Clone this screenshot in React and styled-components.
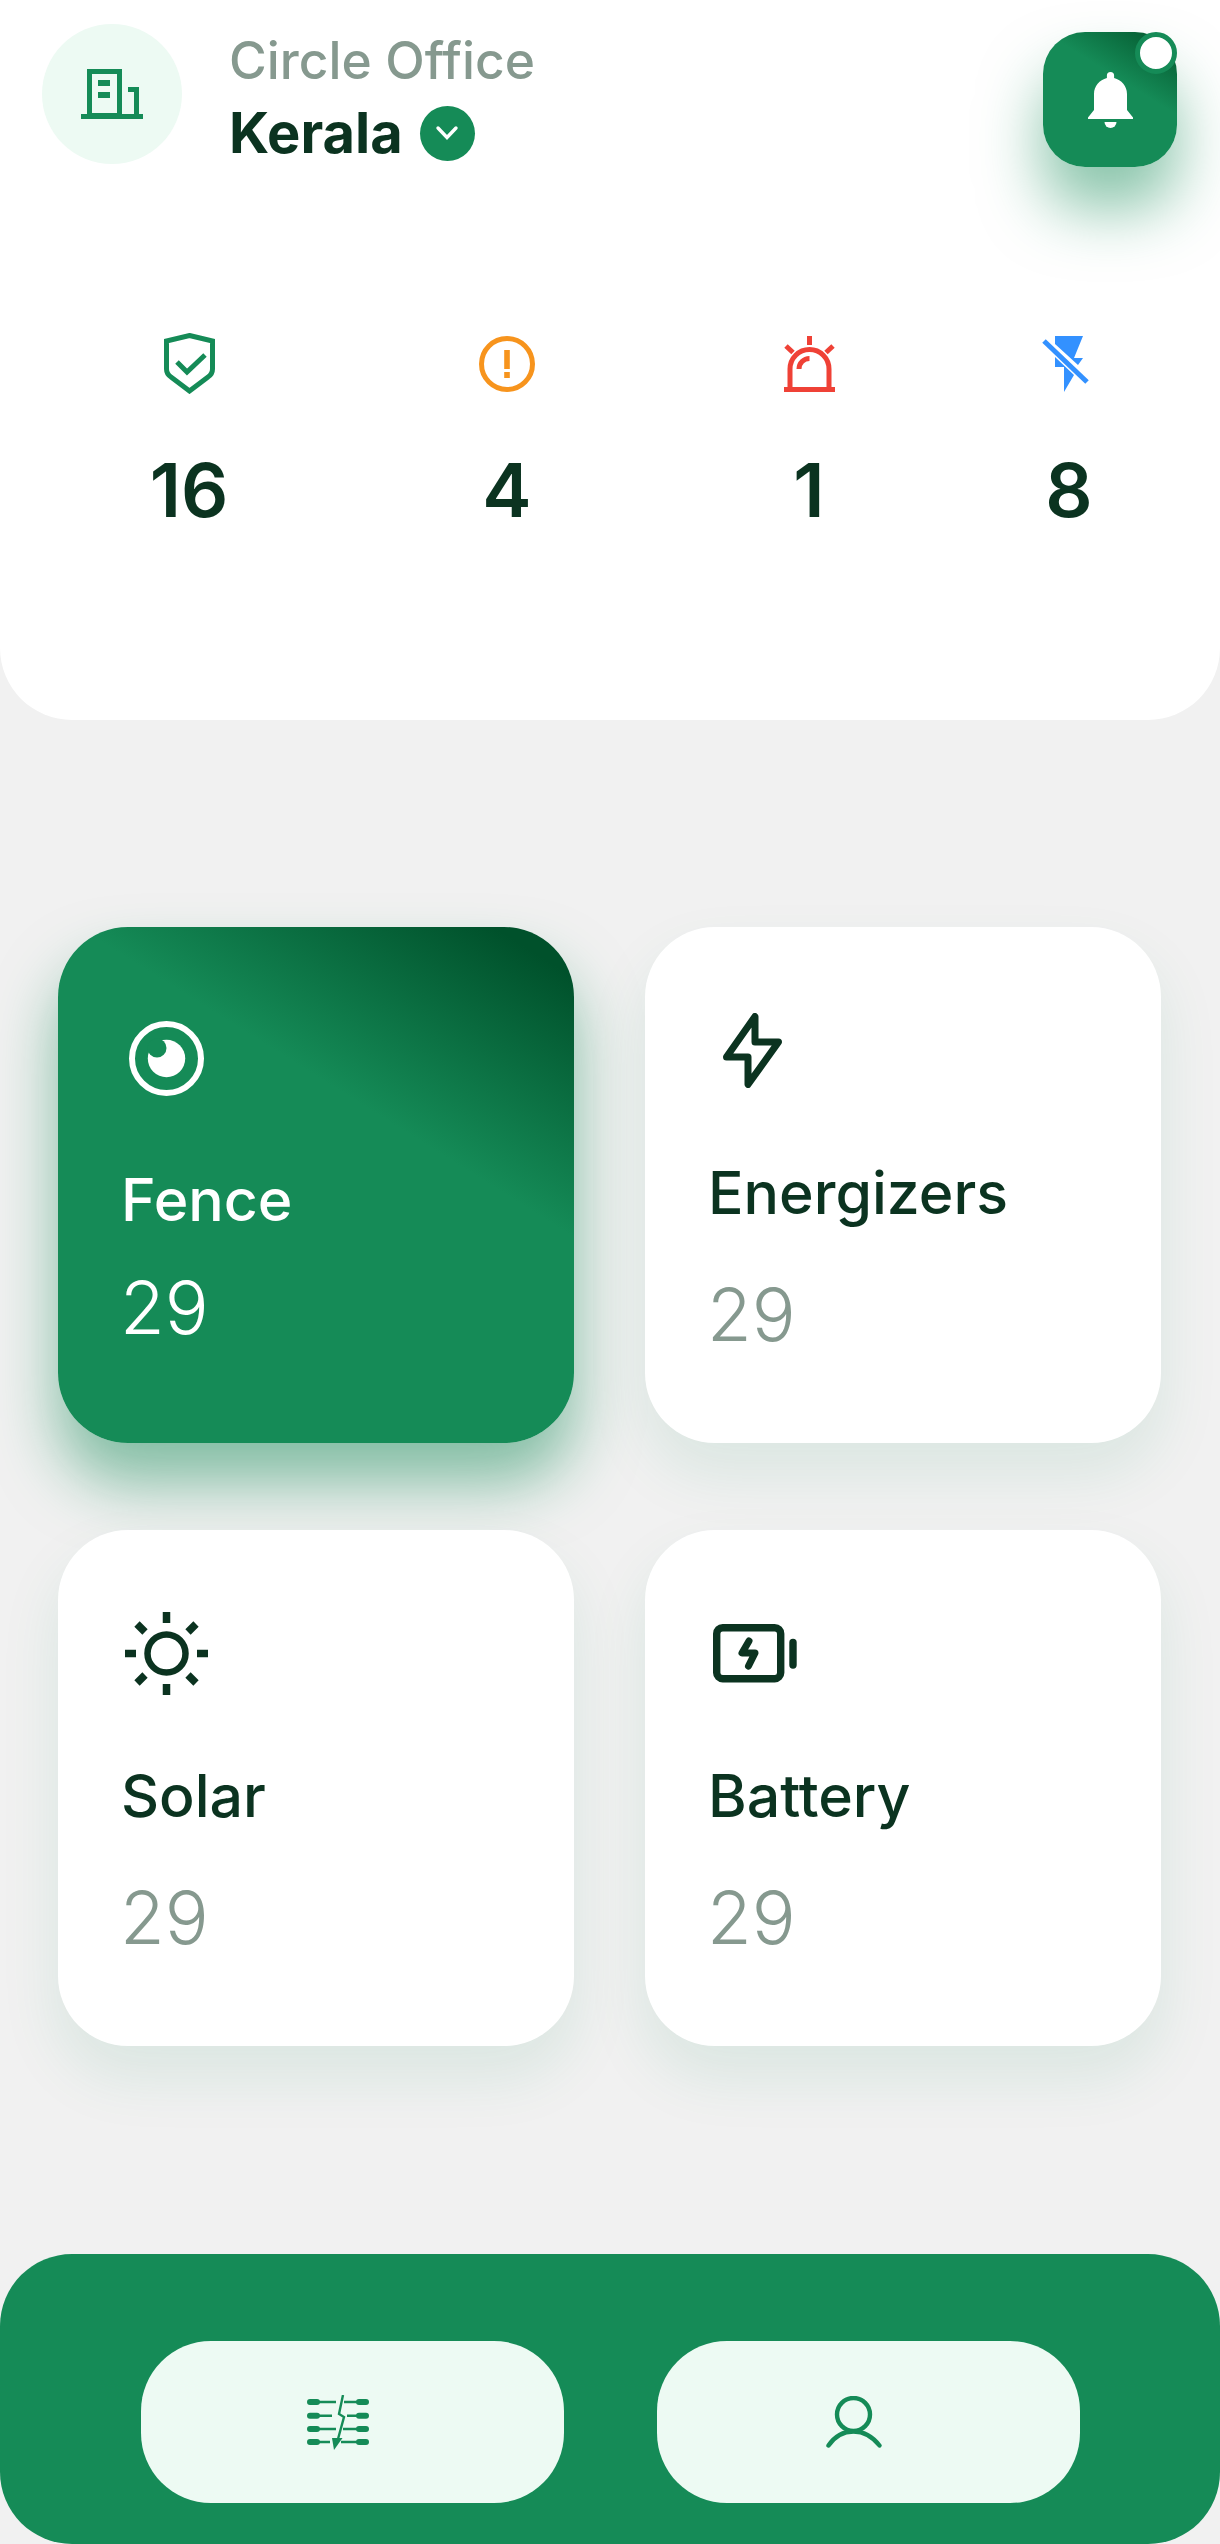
import styled, { createGlobalStyle } from "styled-components";

const GREEN = "#158b57";
const DARK = "#0b3320";
const GREY = "#86998f";
const MINT = "#edfaf3";

const GlobalStyle = createGlobalStyle`
  html, body {
    margin: 0;
    padding: 0;
    background: #f1f1f1;
  }
  * {
    box-sizing: border-box;
  }
`;

const Page = styled.div`
  width: 1220px;
  height: 2544px;
  display: flex;
  flex-direction: column;
  background: #f1f1f1;
  font-family: Inter, "Liberation Sans", sans-serif;
  overflow: hidden;
`;

const Header = styled.header`
  height: 720px;
  padding: 24px 43px 0 42px;
  background: #fff;
  border-radius: 0 0 72px 72px;
`;

const TopRow = styled.div`
  display: flex;
  align-items: flex-start;
`;

const Avatar = styled.div`
  width: 140px;
  height: 140px;
  flex-shrink: 0;
  display: flex;
  align-items: center;
  justify-content: center;
  border-radius: 50%;
  background: ${MINT};
`;

const TitleBlock = styled.div`
  margin-left: 47px;
  padding-top: 6px;
`;

const Subtitle = styled.div`
  font-size: 51.5px;
  line-height: 60px;
  font-weight: 500;
  color: ${GREY};
  white-space: nowrap;
`;

const PlaceRow = styled.div`
  display: flex;
  align-items: center;
  gap: 17px;
  margin-top: 13px;
`;

const Place = styled.div`
  font-size: 56px;
  line-height: 60px;
  font-weight: 700;
  color: ${DARK};
`;

const Chevron = styled.span`
  width: 55px;
  height: 55px;
  display: flex;
  align-items: center;
  justify-content: center;
  border-radius: 50%;
  background: ${GREEN};
`;

const BellButton = styled.button`
  position: relative;
  width: 134px;
  height: 135px;
  margin: 8px 0 0 auto;
  padding: 0;
  display: flex;
  align-items: center;
  justify-content: center;
  border: 0;
  border-radius: 42px;
  background: linear-gradient(212deg, #04592f 4%, ${GREEN} 38%);
  box-shadow: 0 42px 62px rgba(21, 139, 87, 0.5);
`;

const BellDot = styled.span`
  position: absolute;
  top: 0;
  right: 0;
  width: 42px;
  height: 42px;
  border: 5px solid ${GREEN};
  border-radius: 50%;
  background: #fff;
`;

const Stats = styled.div`
  display: grid;
  grid-template-columns: 294px 342px 262px 258px;
  margin: 166px -21px 0 0;
`;

const Stat = styled.div`
  display: flex;
  flex-direction: column;
  align-items: center;
`;

const StatIcon = styled.div`
  height: 61px;
  display: flex;
  align-items: center;
  justify-content: center;
  padding-right: ${({ $shift }) => $shift || 0}px;
`;

const StatValue = styled.div`
  margin-top: 51px;
  font-size: 74px;
  line-height: 90px;
  font-weight: 600;
  color: ${DARK};
`;

const Cards = styled.section`
  display: grid;
  grid-template-columns: 516px 516px;
  grid-auto-rows: 516px;
  column-gap: 71px;
  row-gap: 87px;
  margin-top: 207px;
  padding-left: 58px;
`;

const Card = styled.article`
  padding: ${({ $active }) => ($active ? "81px" : "73px")} 0 0 63px;
  border-radius: 70px;
  background: ${({ $active }) =>
    $active ? `linear-gradient(212deg, #00512b 6%, ${GREEN} 37%)` : "#fff"};
  box-shadow: ${({ $active }) =>
    $active
      ? "0 40px 62px rgba(21, 139, 87, 0.5)"
      : "0 30px 60px rgba(21, 139, 87, 0.1)"};
`;

const CardIcon = styled.div`
  height: 100px;
  display: flex;
  align-items: center;
  padding-left: ${({ $left }) => $left}px;
`;

const CardTitle = styled.div`
  margin-top: ${({ $active }) => ($active ? "57px" : "58px")};
  font-size: 59px;
  line-height: 70px;
  font-weight: 500;
  color: ${({ $active }) => ($active ? "#fff" : DARK)};
`;

const CardCount = styled.div`
  margin: ${({ $active }) => ($active ? "33px" : "47px")} 0 0 -1px;
  font-size: 73px;
  line-height: 80px;
  font-weight: 300;
  color: ${({ $active }) => ($active ? "#fff" : GREY)};
`;

const BottomNav = styled.nav`
  height: 290px;
  margin-top: auto;
  padding-top: 87px;
  display: flex;
  justify-content: center;
  align-items: flex-start;
  gap: 93px;
  border-radius: 72px;
  background: ${GREEN};
`;

const NavPill = styled.button`
  width: 423px;
  height: 162px;
  padding: 0 28px 0 0;
  display: flex;
  align-items: center;
  justify-content: center;
  border: 0;
  border-radius: 70px;
  background: ${MINT};
`;

const BuildingIcon = () => (
  <svg width="62" height="50" viewBox="0 0 62 50" fill="none">
    <rect x="0" y="45" width="62" height="5" fill={GREEN} />
    <rect x="8.5" y="2.5" width="30" height="44" stroke={GREEN} strokeWidth="5" />
    <rect x="17" y="11" width="12" height="6" fill={GREEN} />
    <rect x="17" y="23" width="12" height="6" fill={GREEN} />
    <path d="M47 20.5H55.5V46" stroke={GREEN} strokeWidth="5" />
  </svg>
);

const ChevronIcon = () => (
  <svg width="24" height="16" viewBox="0 0 24 16" fill="none">
    <path d="M3 3L12 12.5L21 3" stroke="#fff" strokeWidth="3.4" strokeLinecap="round" />
  </svg>
);

const BellIcon = () => (
  <svg width="45" height="56" viewBox="0 0 45 56" fill="#fff">
    <path d="M22.5 0a3.6 3.6 0 0 1 3.6 3.6V6C33.5 8 39 14 39 22V38L45 45.5V47H0V45.5L6 38V22C6 14 11.5 8 18.9 6V3.6A3.6 3.6 0 0 1 22.5 0Z" />
    <path d="M16.5 50H28.5A6 6 0 0 1 16.5 50Z" />
  </svg>
);

const ShieldIcon = () => (
  <svg width="51" height="61" viewBox="0 0 51 61" fill="none" stroke={GREEN} strokeWidth="5">
    <path d="M25.5 2.5L48.5 8V36Q48.5 41 44 44L25.5 58L7 44Q2.5 41 2.5 36V8Z" />
    <path d="M13 29L23 39L41 22" />
  </svg>
);

const WarningIcon = () => (
  <svg width="56" height="56" viewBox="0 0 56 56" fill="none">
    <circle cx="28" cy="28" r="25.5" stroke="#f7941d" strokeWidth="5" />
    <rect x="25.2" y="14" width="5.6" height="19" fill="#f7941d" />
    <rect x="25.2" y="36" width="5.6" height="6" fill="#f7941d" />
  </svg>
);

const AlarmIcon = () => (
  <svg width="51" height="56" viewBox="0 0 51 56" fill="none" stroke="#ef4136" strokeWidth="5">
    <path d="M6 52V33A19.5 19.5 0 0 1 45 33V52" />
    <path d="M0 53.5H51" />
    <path d="M15 33A10.5 10.5 0 0 1 25.5 22.5" />
    <path d="M25.5 0V9M2 10L9 16.5M49 10L42 16.5" />
  </svg>
);

const FlashOffIcon = () => (
  <svg width="47" height="56" viewBox="0 0 47 56" fill="#3391ff">
    <path d="M13 0H41L32 22H41L36 29L13 8Z" />
    <path d="M13 21V31H22V56L32 39Z" />
    <path d="M2 5L45 46" stroke="#3391ff" strokeWidth="5" />
  </svg>
);

const EyeIcon = () => (
  <svg width="75" height="75" viewBox="0 0 75 75" fill="none">
    <circle cx="37.5" cy="37.5" r="34.5" stroke="#fff" strokeWidth="6" />
    <circle cx="37.5" cy="37.5" r="18.7" fill="#fff" />
    <circle cx="28" cy="27" r="9.5" fill={GREEN} />
  </svg>
);

const BoltIcon = () => (
  <svg width="59" height="75" viewBox="0 0 59 75" fill="none">
    <path
      d="M32 3.5V29H55.5L25 71.5V44H3.5Z"
      stroke={DARK}
      strokeWidth="7"
      strokeLinejoin="round"
    />
  </svg>
);

const SunIcon = () => (
  <svg width="83" height="83" viewBox="0 0 83 83" fill="none" stroke={DARK}>
    <circle cx="41.5" cy="41.5" r="19" strokeWidth="6.5" />
    <path
      d="M41.5 0V11M41.5 72V83M0 41.5H11M72 41.5H83M12 12L20 20M71 12L63 20M12 71L20 63M71 71L63 63"
      strokeWidth="7.5"
    />
  </svg>
);

const BatteryIcon = () => (
  <svg width="84" height="59" viewBox="0 0 84 59" fill="none" stroke={DARK} strokeLinecap="round" strokeLinejoin="round">
    <rect x="3.7" y="3.7" width="64" height="51" rx="6" strokeWidth="7.4" />
    <path d="M80 18.5V41" strokeWidth="7.4" />
    <path d="M36 17L29 29H42L35.5 42" strokeWidth="7" />
  </svg>
);

const LinesIcon = () => (
  <svg width="62" height="55" viewBox="0 0 62 55" fill="none" stroke={GREEN}>
    <g strokeWidth="6" strokeLinecap="round">
      <path d="M3 7H10M3 20.7H10M3 34H10M3 47H10" />
      <path d="M52 7H59M52 20.7H59M52 34H59M52 47H59" />
    </g>
    <g strokeWidth="2.4">
      <path d="M10 7H29M10 20.7H25M10 34H29M10 47H23" />
      <path d="M37 7H52M40 20.7H52M36 34H52M34 47H52" />
      <path d="M36 0L32 19L37 22L31 44" />
    </g>
    <path d="M25 43H35.5L27 55Z" fill={GREEN} stroke="none" />
  </svg>
);

const UserIcon = () => (
  <svg width="56" height="52" viewBox="0 0 56 52" fill="none" stroke={GREEN} strokeWidth="4.4" strokeLinecap="round">
    <circle cx="27.5" cy="18.5" r="16.5" />
    <path d="M2.5 49.5C9 40 17 35.5 27.5 35.5S46 40 53.5 49.5" />
  </svg>
);

const stats = [
  { icon: <ShieldIcon />, value: 16 },
  { icon: <WarningIcon />, value: 4 },
  { icon: <AlarmIcon />, value: 1 },
  { icon: <FlashOffIcon />, value: 8, shift: 8 },
];

const cards = [
  { title: "Fence", count: 29, icon: <EyeIcon />, left: 8, active: true },
  { title: "Energizers", count: 29, icon: <BoltIcon />, left: 15 },
  { title: "Solar", count: 29, icon: <SunIcon />, left: 4 },
  { title: "Battery", count: 29, icon: <BatteryIcon />, left: 5 },
];

const App = () => (
  <Page>
    <GlobalStyle />
    <Header>
      <TopRow>
        <Avatar>
          <BuildingIcon />
        </Avatar>
        <TitleBlock>
          <Subtitle>Circle Office</Subtitle>
          <PlaceRow>
            <Place>Kerala</Place>
            <Chevron>
              <ChevronIcon />
            </Chevron>
          </PlaceRow>
        </TitleBlock>
        <BellButton>
          <BellIcon />
          <BellDot />
        </BellButton>
      </TopRow>
      <Stats>
        {stats.map((stat, i) => (
          <Stat key={i}>
            <StatIcon $shift={stat.shift}>{stat.icon}</StatIcon>
            <StatValue>{stat.value}</StatValue>
          </Stat>
        ))}
      </Stats>
    </Header>
    <Cards>
      {cards.map((card) => (
        <Card key={card.title} $active={card.active}>
          <CardIcon $left={card.left}>{card.icon}</CardIcon>
          <CardTitle $active={card.active}>{card.title}</CardTitle>
          <CardCount $active={card.active}>{card.count}</CardCount>
        </Card>
      ))}
    </Cards>
    <BottomNav>
      <NavPill>
        <LinesIcon />
      </NavPill>
      <NavPill>
        <UserIcon />
      </NavPill>
    </BottomNav>
  </Page>
);

export default App;
